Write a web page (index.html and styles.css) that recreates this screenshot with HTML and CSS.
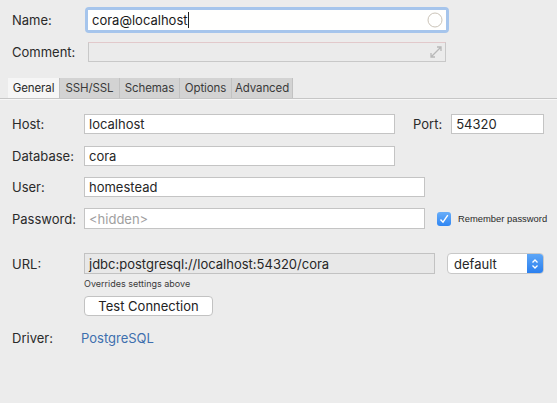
FILE: index.html
```html
<!DOCTYPE html>
<html>
<head>
<meta charset="utf-8">
<link rel="stylesheet" href="styles.css">
</head>
<body>
<div class="page">
  <div class="row row-name">
    <span class="label lbl-top">Name:</span>
    <div class="ring">
      <div class="field field-name">
        <span class="val">cora@localhost</span><span class="caret"></span>
        <svg class="circle" width="16" height="16" viewBox="0 0 16 16"><circle cx="8" cy="8" r="7" fill="none" stroke="#cbc4b8" stroke-width="1"/></svg>
      </div>
    </div>
  </div>
  <div class="row row-comment">
    <span class="label lbl-top">Comment:</span>
    <div class="field field-comment">
      <svg class="expand" width="12" height="12" viewBox="0 0 12 12"><path d="M1.5 10.5 L10.5 1.5 M1 7 V11 H5 M7 1 H11 V5" fill="none" stroke="#b8b8b8" stroke-width="1.3"/></svg>
    </div>
  </div>
  <div class="tabs">
    <span class="tab active t-gen">General</span>
    <span class="tab t-ssh">SSH/SSL</span>
    <span class="tab t-sch">Schemas</span>
    <span class="tab t-opt">Options</span>
    <span class="tab t-adv">Advanced</span>
  </div>
  <div class="content">
    <div class="row r-host">
      <span class="label">Host:</span>
      <div class="field w-host"><span class="val">localhost</span></div>
      <span class="label lbl-port">Port:</span>
      <div class="field w-port"><span class="val">54320</span></div>
    </div>
    <div class="row r-db">
      <span class="label">Database:</span>
      <div class="field w-host"><span class="val">cora</span></div>
    </div>
    <div class="row r-user">
      <span class="label">User:</span>
      <div class="field w-user"><span class="val">homestead</span></div>
    </div>
    <div class="row r-pass">
      <span class="label">Password:</span>
      <div class="field w-user"><span class="val ph">&lt;hidden&gt;</span></div>
      <span class="check"><svg width="10" height="10" viewBox="0 0 10 10"><path d="M1.5 5.5 L4 8.2 L8.8 1.2" fill="none" stroke="#fff" stroke-width="1.4"/></svg></span>
      <span class="remember">Remember password</span>
    </div>
    <div class="row r-url">
      <span class="label">URL:</span>
      <div class="field w-url"><span class="val">jdbc:postgresql://localhost:54320/cora</span></div>
      <div class="select">
        <span class="sel-val">default</span>
        <span class="stepper"><svg width="8" height="12" viewBox="0 0 8 12"><path d="M1.5 4.5 L4 2 L6.5 4.5 M1.5 7.5 L4 10 L6.5 7.5" fill="none" stroke="#fff" stroke-width="1.3"/></svg></span>
      </div>
    </div>
    <div class="hint">Overrides settings above</div>
    <div class="btn-row"><span class="btn">Test Connection</span></div>
    <div class="row r-driver">
      <span class="label">Driver:</span>
      <span class="link">PostgreSQL</span>
    </div>
  </div>
</div>
</body>
</html>
```
FILE: styles.css
```css
html, body {
  margin: 0;
  padding: 0;
  background: #ececec;
}
body {
  width: 557px;
  height: 403px;
  overflow: hidden;
  font-family: "Inter", "Liberation Sans", sans-serif;
  font-size: 13px;
  color: #262626;
}
.page {
  display: flex;
  flex-direction: column;
}
.row {
  display: flex;
  align-items: center;
}
.label {
  width: 72px;
  padding-left: 12px;
  flex: none;
  color: #2a2a2a;
}
.lbl-top {
  width: 73px;
}
.row-name {
  margin-top: 7px;
  height: 26px;
}
.ring {
  box-sizing: border-box;
  width: 364px;
  height: 26px;
  border: 3px solid #a6c5ec;
  border-radius: 4px;
  display: flex;
}
.field {
  box-sizing: border-box;
  height: 20px;
  background: #fff;
  border: 1px solid #c4c4c4;
  display: flex;
  align-items: center;
  position: relative;
  flex: none;
}
.field-name {
  flex: 1;
  border: none;
  background: #fffffe;
  padding-left: 4px;
}
.val {
  padding-left: 4px;
  white-space: nowrap;
}
.field-name .val {
  padding-left: 0;
  color: #1a1a1a;
}
.caret {
  width: 1px;
  height: 16px;
  background: #222;
}
.circle {
  position: absolute;
  right: 3px;
  top: 2px;
}
.row-comment {
  margin-top: 9px;
  height: 20px;
}
.label.lbl-top + .field-comment {
  margin-left: 3px;
}
.field-comment {
  width: 358px;
  background: #ebebeb;
  border-color: #c8c8c8;
  border-top-color: #e2c9cb;
}
.expand {
  position: absolute;
  right: 3px;
  top: 3px;
}
.tabs {
  margin-top: 16px;
  display: flex;
  padding-left: 8px;
  height: 20px;
  border-bottom: 1px solid #c6c6c6;
  box-shadow: 0 1px 0 #f7f7f7;
}
.tab {
  box-sizing: border-box;
  height: 20px;
  display: flex;
  align-items: center;
  justify-content: center;
  font-size: 11.5px;
  letter-spacing: -0.1px;
  background: #d3d3d3;
  color: #3a3a3a;
  border-right: 1px solid #c2c2c2;
}
.t-gen { width: 52px; }
.t-ssh { width: 60px; }
.t-sch { width: 60px; }
.t-opt { width: 52px; }
.t-adv { width: 61px; }
.tab.active {
  background: #f6f6f6;
  color: #2a2a2a;
}
.content {
  display: flex;
  flex-direction: column;
}
.r-host {
  margin-top: 15px;
  height: 20px;
}
.w-host {
  width: 311px;
}
.lbl-port {
  width: auto;
  padding-left: 18px;
  margin-right: 9px;
}
.w-port {
  width: 93px;
}
.r-db {
  margin-top: 12px;
  height: 20px;
}
.r-user {
  margin-top: 11px;
  height: 20px;
}
.w-user {
  width: 341px;
}
.r-pass {
  margin-top: 11px;
  height: 21px;
}
.r-pass .field {
  height: 21px;
}
.ph {
  color: #a0a0a0;
}
.check {
  margin-left: 12px;
  width: 14px;
  height: 14px;
  flex: none;
  border-radius: 3px;
  background: linear-gradient(#69aef9, #2f86f3);
  display: flex;
  align-items: center;
  justify-content: center;
}
.remember {
  margin-left: 7px;
  font-family: "Liberation Sans", sans-serif;
  font-size: 9.4px;
  white-space: nowrap;
  color: #2a2a2a;
}
.r-url {
  margin-top: 24px;
  height: 21px;
}
.w-url {
  width: 351px;
  height: 21px;
  background: #e8e8e8;
  border-color: #c2c2c2;
}
.select {
  box-sizing: border-box;
  margin-left: 12px;
  width: 97px;
  height: 21px;
  background: #fff;
  border: 1px solid #c8c8c8;
  border-radius: 4px;
  display: flex;
  align-items: center;
  overflow: hidden;
}
.sel-val {
  flex: 1;
  padding-left: 6px;
}
.stepper {
  width: 16px;
  height: 100%;
  background: linear-gradient(#5da6f7, #2b80ef);
  display: flex;
  align-items: center;
  justify-content: center;
}
.hint {
  margin-top: 4px;
  padding-left: 84px;
  font-size: 9px;
  color: #3a3a3a;
  height: 12px;
  line-height: 12px;
}
.btn-row {
  margin-top: 6px;
  padding-left: 84px;
  display: flex;
}
.btn {
  box-sizing: border-box;
  width: 129px;
  height: 20px;
  background: #fff;
  border: 1px solid #c2c2c2;
  border-radius: 4px;
  display: flex;
  align-items: center;
  justify-content: center;
  color: #222;
}
.r-driver {
  margin-top: 14px;
  height: 16px;
}
.r-driver .label {
  width: 69px;
}
.link {
  color: #3e6fae;
}
```
